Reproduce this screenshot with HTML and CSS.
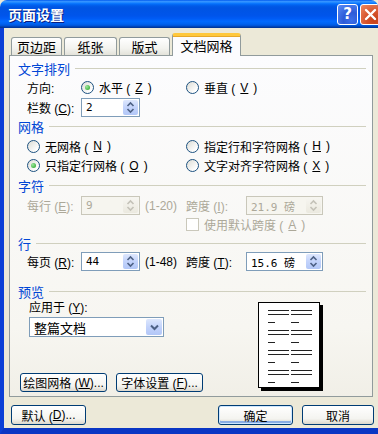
FILE: index.html
```html
<!DOCTYPE html>
<html lang="zh-CN">
<head>
    <meta charset="UTF-8">
    <meta name="viewport" content="width=device-width, initial-scale=1.0">
    <title>页面设置</title>
    <link rel="stylesheet" href="styles.css">
</head>
<body>

<div class="window">
    <div class="titlebar">
        <span class="title">页面设置</span>
        <div class="caption-buttons">
            <span class="cap-btn help">?</span>
            <span class="cap-btn close">
                <svg width="13" height="13" viewBox="0 0 13 13"><path d="M2 2 L11 11 M11 2 L2 11" stroke="#fff" stroke-width="2.4" stroke-linecap="round"/></svg>
            </span>
        </div>
    </div>

    <div class="frame">
        <div class="client">
            <div class="tabs">
                <span class="tab t1">页边距</span>
                <span class="tab t2">纸张</span>
                <span class="tab t3">版式</span>
                <span class="tab t4 selected">文档网格</span>
            </div>

            <div class="panel">
                <div class="group-head first">文字排列</div>
                <div class="row h19">
                    <span class="lbl">方向:</span>
                    <span class="radio checked"><i></i>水平 (<u>Z</u>)</span>
                    <span class="radio span-right"><i></i>垂直 (<u>V</u>)</span>
                </div>
                <div class="row h20">
                    <span class="lbl">栏数 (<u>C</u>):</span>
                    <span class="cell">
                        <span class="spin narrow">
                            <span class="val">2</span>
                            <span class="spin-btn"><svg width="11" height="15" viewBox="0 0 11 15"><path d="M2.5 6 L5.5 3 L8.5 6 M2.5 9 L5.5 12 L8.5 9" fill="none" stroke="#4d6185" stroke-width="1.6"/></svg></span>
                        </span>
                    </span>
                </div>

                <div class="group-head h19">网格</div>
                <div class="row h20">
                    <span class="radio span-left"><i></i>无网格 (<u>N</u>)</span>
                    <span class="radio span-right"><i></i>指定行和字符网格 (<u>H</u>)</span>
                </div>
                <div class="row h19">
                    <span class="radio span-left checked"><i></i>只指定行网格 (<u>O</u>)</span>
                    <span class="radio span-right"><i></i>文字对齐字符网格 (<u>X</u>)</span>
                </div>

                <div class="group-head h21">字符</div>
                <div class="row h19 disabled">
                    <span class="lbl">每行 (<u>E</u>):</span>
                    <span class="cell">
                        <span class="spin narrow">
                            <span class="val">9</span>
                            <span class="spin-btn"><svg width="11" height="15" viewBox="0 0 11 15"><path d="M2.5 6 L5.5 3 L8.5 6 M2.5 9 L5.5 12 L8.5 9" fill="none" stroke="#c4c2b8" stroke-width="1.6"/></svg></span>
                        </span>
                        <span class="range">(1-20)</span>
                    </span>
                    <span class="lbl">跨度 (<u>I</u>):</span>
                    <span class="spin wide">
                        <span class="val">21.9 磅</span>
                        <span class="spin-btn"><svg width="11" height="15" viewBox="0 0 11 15"><path d="M2.5 6 L5.5 3 L8.5 6 M2.5 9 L5.5 12 L8.5 9" fill="none" stroke="#c4c2b8" stroke-width="1.6"/></svg></span>
                    </span>
                </div>
                <div class="row h19 disabled">
                    <span class="check span-right"><i></i>使用默认跨度 (<u>A</u>)</span>
                </div>

                <div class="group-head h18">行</div>
                <div class="row h19">
                    <span class="lbl">每页 (<u>R</u>):</span>
                    <span class="cell">
                        <span class="spin narrow">
                            <span class="val">44</span>
                            <span class="spin-btn"><svg width="11" height="15" viewBox="0 0 11 15"><path d="M2.5 6 L5.5 3 L8.5 6 M2.5 9 L5.5 12 L8.5 9" fill="none" stroke="#4d6185" stroke-width="1.6"/></svg></span>
                        </span>
                        <span class="range">(1-48)</span>
                    </span>
                    <span class="lbl">跨度 (<u>T</u>):</span>
                    <span class="spin wide">
                        <span class="val">15.6 磅</span>
                        <span class="spin-btn"><svg width="11" height="15" viewBox="0 0 11 15"><path d="M2.5 6 L5.5 3 L8.5 6 M2.5 9 L5.5 12 L8.5 9" fill="none" stroke="#4d6185" stroke-width="1.6"/></svg></span>
                    </span>
                </div>

                <div class="group-head preview-head">预览</div>
                <div class="preview-section">
                    <div class="apply-col">
                        <div class="apply-lbl">应用于 (<u>Y</u>):</div>
                        <div class="select">
                            <span class="val">整篇文档</span>
                            <span class="drop-btn"><svg width="15" height="16" viewBox="0 0 15 16"><path d="M4 6.5 L7.5 10 L11 6.5" fill="none" stroke="#4d6185" stroke-width="2"/></svg></span>
                        </div>
                        <div class="panel-buttons">
                            <span class="btn grid-btn">绘图网格 (<u>W</u>)...</span>
                            <span class="btn font-btn">字体设置 (<u>F</u>)...</span>
                        </div>
                    </div>
                    <svg class="page-preview" width="66" height="92" viewBox="0 0 66 92">
                        <rect x="3" y="3" width="62" height="86" fill="#000"/>
                        <rect x="0.5" y="0.5" width="61" height="85" fill="#fff" stroke="#000"/>
                        <g stroke="#222" stroke-width="1.2">
                            <path d="M10 8.5 H31 M33 8.5 H54 M10 12.5 H31 M33 12.5 H54 M10 20.5 H17 M33 20.5 H41"/>
                            <path d="M10 28.5 H31 M33 28.5 H54 M10 32.5 H31 M33 32.5 H54 M10 40.5 H17 M33 40.5 H41"/>
                            <path d="M10 48.5 H31 M33 48.5 H54 M10 52.5 H31 M33 52.5 H54 M10 60.5 H17 M33 60.5 H41"/>
                            <path d="M10 68.5 H31 M33 68.5 H54 M10 72.5 H31 M33 72.5 H54 M10 80.5 H17 M33 80.5 H41"/>
                        </g>
                    </svg>
                </div>
            </div>

            <div class="footer">
                <span class="btn default-btn">默认 (<u>D</u>)...</span>
                <span class="btn ok-btn">确定</span>
                <span class="btn cancel-btn">取消</span>
            </div>
        </div>
    </div>
</div>

</body>
</html>
```

FILE: styles.css
```css
html, body {
    margin: 0;
    overflow: hidden;
}

body {
    width: 378px;
    height: 434px;
    background-color: #ece9d8;
    font-family: "Liberation Sans", "Noto Sans CJK SC", sans-serif;
    font-size: 12px;
    color: #000;
}

u {
    text-decoration: underline;
    text-underline-offset: 1px;
}

/* window frame */

.window {
    width: 378px;
    height: 434px;
    display: flex;
    flex-direction: column;
    overflow: hidden;
}

.titlebar {
    height: 28px;
    flex-shrink: 0;
    display: flex;
    align-items: center;
    justify-content: space-between;
    padding: 0 0 0 8px;
    border-radius: 7px 7px 0 0;
    overflow: hidden;
    background: linear-gradient(to bottom, #0058ee 0%, #3593ff 5%, #288eff 8%, #127dff 11%, #036ffc 14%, #0262ee 18%, #0057e5 24%, #0054e3 30%, #0055eb 56%, #005bf5 66%, #026afe 76%, #0062ef 86%, #0052d6 92%, #0040ab 96%, #003092 100%);
}

.title {
    color: #fff;
    font-family: "Noto Sans CJK SC", sans-serif;
    font-weight: bold;
    font-size: 14px;
    text-shadow: 1px 1px 0 #0a1e80;
}

.caption-buttons {
    display: flex;
    gap: 2px;
    margin-right: -3px;
}

.cap-btn {
    width: 21px;
    height: 21px;
    box-sizing: border-box;
    border: 1px solid #fff;
    border-radius: 3px;
    display: flex;
    align-items: center;
    justify-content: center;
    color: #fff;
    font-family: "DejaVu Sans", sans-serif;
    font-weight: bold;
    font-size: 15px;
}

.help {
    background: radial-gradient(circle at 70% 80%, #3c6fe8 0%, #2d5bd8 40%, #5b8ef7 100%);
}

.close {
    background: radial-gradient(circle at 70% 80%, #c6401a 0%, #d5512a 40%, #ef8a62 100%);
}

.frame {
    flex: 1;
    display: flex;
    border-left: 4px solid #0b3fd6;
    border-bottom: 6px solid #0a36c4;
}

.client {
    flex: 1;
    display: flex;
    flex-direction: column;
    background-color: #ece9d8;
}

/* tabs */

.tabs {
    height: 27px;
    display: flex;
    align-items: flex-end;
    padding-left: 7px;
}

.tab {
    height: 18px;
    box-sizing: border-box;
    display: flex;
    align-items: center;
    justify-content: center;
    border: 1px solid #919b9c;
    border-bottom: none;
    border-radius: 3px 3px 0 0;
    background: linear-gradient(to bottom, #fff, #f3f3ef 60%, #e3e2da);
    margin-right: 2px;
    font-size: 13px;
}

.t1 { width: 51px; }
.t2 { width: 53px; }
.t3 { width: 51px; }

.tab.selected {
    width: 69px;
    height: 23px;
    margin-bottom: -1px;
    position: relative;
    z-index: 1;
    background: #fcfcfe;
    border-top: 3px solid #ffc83c;
    box-shadow: inset 0 1px 0 #e6a82a;
    padding-bottom: 2px;
}

/* tab panel */

.panel {
    margin-left: 5px;
    width: 364px;
    height: 342px;
    box-sizing: border-box;
    border: 1px solid #919b9c;
    background: linear-gradient(to bottom, #fcfcfe, #f7f6f1 80%, #f1efe7);
    padding: 0 6px 0 8px;
}

.group-head {
    display: flex;
    align-items: center;
    color: #0046d5;
    font-size: 13px;
}

.group-head::after {
    content: "";
    flex: 1;
    height: 1px;
    margin-left: 5px;
    background-color: #d0d0bf;
}

.group-head.first {
    margin-top: 2px;
    height: 20px;
}

.preview-head {
    margin-top: 10px;
    height: 20px;
}

.h18 { height: 18px; }
.h19 { height: 19px; }
.h20 { height: 20px; }
.h21 { height: 21px; }

.row {
    display: grid;
    grid-template-columns: 54px 105px 60px 1fr;
    align-items: center;
    padding-left: 9px;
    white-space: nowrap;
}

.row.disabled {
    color: #aca899;
}

.cell {
    display: flex;
    align-items: center;
    gap: 5px;
}

.span-left {
    grid-column: 1 / 3;
}

.span-right {
    grid-column: 3 / 5;
}

/* radio and checkbox */

.radio,
.check {
    display: flex;
    align-items: center;
    gap: 5px;
}

.radio i {
    width: 13px;
    height: 13px;
    box-sizing: border-box;
    border: 1px solid #1c5180;
    border-radius: 50%;
    background: linear-gradient(135deg, #dcdcd5, #fff 80%);
    display: flex;
    align-items: center;
    justify-content: center;
    flex-shrink: 0;
}

.radio.checked i::after {
    content: "";
    width: 5px;
    height: 5px;
    border-radius: 50%;
    background: radial-gradient(circle at 35% 35%, #9de79d, #21a121);
}

.check i {
    width: 13px;
    height: 13px;
    box-sizing: border-box;
    border: 1px solid #cac8bb;
    background-color: #fff;
    flex-shrink: 0;
}

/* spin boxes */

.spin {
    height: 19px;
    box-sizing: border-box;
    border: 1px solid #7f9db9;
    background-color: #fff;
    display: flex;
    align-items: center;
    justify-content: space-between;
    padding: 1px;
}

.narrow { width: 59px; }
.wide { width: 77px; }

.spin .val {
    padding-left: 3px;
    font-family: "DejaVu Sans Mono", "Noto Sans CJK SC", monospace;
    font-size: 11px;
}

.spin-btn {
    width: 15px;
    height: 15px;
    border-radius: 2px;
    background: linear-gradient(to bottom, #dde7fd, #c3d3fb 50%, #b2c7f7);
    display: flex;
    align-items: center;
    justify-content: center;
}

.disabled .spin {
    border-color: #c9c7ba;
    background-color: #f6f5ef;
}

.disabled .spin-btn {
    background: linear-gradient(to bottom, #f6f5f0, #ebe9df);
}

.range {
    white-space: nowrap;
}

/* preview section */

.preview-section {
    display: grid;
    grid-template-columns: 238px 1fr;
    padding-left: 2px;
}

.apply-col {
    display: flex;
    flex-direction: column;
}

.apply-lbl {
    height: 14px;
    line-height: 14px;
    margin-left: 9px;
}

.select {
    margin-left: 9px;
    margin-top: 2px;
    width: 135px;
    height: 20px;
    box-sizing: border-box;
    border: 1px solid #7f9db9;
    background-color: #fff;
    display: flex;
    align-items: center;
    justify-content: space-between;
    padding: 1px;
}

.select .val {
    padding-left: 3px;
    font-size: 13px;
}

.drop-btn {
    width: 16px;
    height: 16px;
    border-radius: 2px;
    background: linear-gradient(to bottom, #dde7fd, #c3d3fb 50%, #b2c7f7);
    display: flex;
    align-items: center;
    justify-content: center;
}

.panel-buttons {
    margin-top: 36px;
    display: flex;
    gap: 9px;
}

.page-preview {
    margin-top: 1px;
}

/* buttons */

.btn {
    height: 19px;
    box-sizing: border-box;
    border: 1px solid #003c74;
    border-radius: 3px;
    background: linear-gradient(to bottom, #fff, #f4f4f0 70%, #dcd8cd);
    display: flex;
    align-items: center;
    justify-content: center;
    white-space: nowrap;
}

.grid-btn { width: 87px; }
.font-btn { width: 87px; }

.footer {
    display: flex;
    align-items: center;
    padding: 8px 0 0 7px;
}

.footer .btn {
    height: 20px;
}

.default-btn { width: 75px; }

.ok-btn {
    width: 75px;
    margin-left: 132px;
    box-shadow: inset 0 0 0 1px #cee7ff, inset 0 -2px 0 1px #89ade4;
}

.cancel-btn {
    width: 72px;
    margin-left: 9px;
}
```
